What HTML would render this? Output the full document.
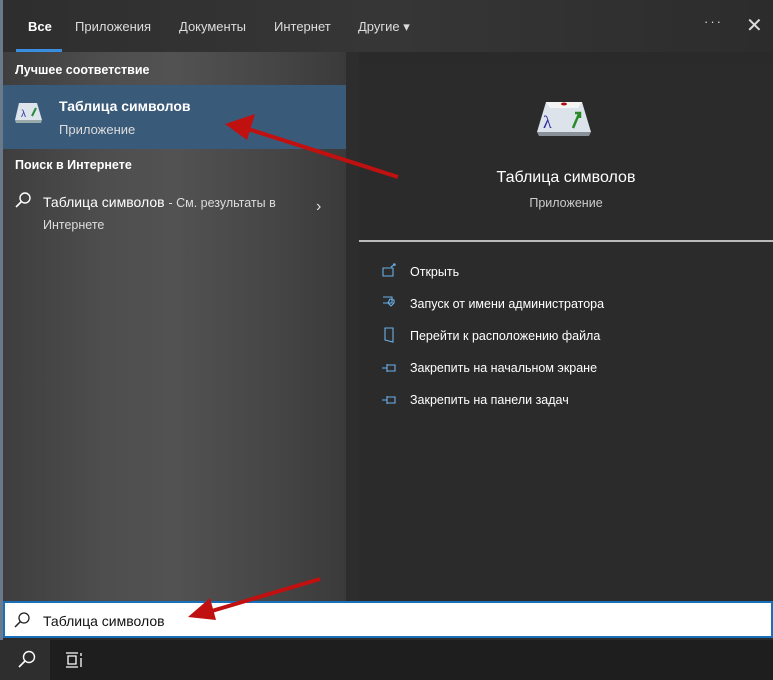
<!DOCTYPE html>
<html><head><meta charset="utf-8"><style>
body{margin:0;width:773px;height:680px;overflow:hidden;background:#2a2a2a;font-family:"Liberation Sans",sans-serif;position:relative;color:#fff}
.abs{position:absolute}
.tab{position:absolute;top:19px;font-size:13px;color:#ddd}
</style></head><body>
<div class="abs" style="left:0;top:0;width:773px;height:52px;background:linear-gradient(90deg,#2e2e2e,#363636 50%,#2c2c2c)"></div>
<div class="abs" style="left:0;top:0;width:3px;height:640px;background:#6a7a8a"></div>
<div class="tab" style="left:28px;color:#fff;font-weight:bold">Все</div>
<div class="abs" style="left:16px;top:49px;width:46px;height:3px;background:#3a8ee0"></div>
<div class="tab" style="left:75px">Приложения</div>
<div class="tab" style="left:179px">Документы</div>
<div class="tab" style="left:274px">Интернет</div>
<div class="tab" style="left:358px">Другие ▾</div>
<div class="tab" style="left:704px;top:14px;letter-spacing:2px">···</div>
<div class="tab" style="left:746px;top:13px;font-size:20px;color:#ddd">✕</div>
<div class="abs" style="left:3px;top:52px;width:343px;height:550px;background:linear-gradient(90deg,#3e3e3e,#4e4e4e 30%,#525252 50%,#454545 80%,#3a3a3a)"></div>
<div class="abs" style="left:346px;top:52px;width:13px;height:550px;background:#2d2d2d"></div>
<div class="abs" style="left:15px;top:63px;font-size:12.5px;font-weight:bold">Лучшее соответствие</div>
<div class="abs" style="left:3px;top:85px;width:343px;height:64px;background:#3a5a7a"></div>
<svg class="abs" style="left:14px;top:100px" width="30" height="24"><path d="M5 3h18l5 17H1z" fill="#dde4ec"/><path d="M1 20h27l-1 3H2z" fill="#9aa"/><text x="7" y="17" font-size="10" fill="#2a3a9a">λ</text><path d="M18 16l4-8" stroke="#2a8a3a" stroke-width="2"/></svg>
<div class="abs" style="left:59px;top:98px;font-size:14px;font-weight:bold">Таблица символов</div>
<div class="abs" style="left:59px;top:122px;font-size:13px;color:#ddd">Приложение</div>
<div class="abs" style="left:15px;top:158px;font-size:12.5px;font-weight:bold">Поиск в Интернете</div>
<svg class="abs" style="left:14px;top:191px" width="18" height="18"><circle cx="11" cy="7" r="5" fill="none" stroke="#fff" stroke-width="1.4"/><path d="M7.5 10.5L2 16" stroke="#fff" stroke-width="1.6"/></svg>
<div class="abs" style="left:43px;top:192px;font-size:14px;line-height:21px;width:260px">Таблица символов <span style="font-size:12.5px;color:#ddd">- См. результаты в</span><br><span style="font-size:12.5px;color:#ddd">Интернете</span></div>
<div class="abs" style="left:316px;top:198px;font-size:16px;color:#ddd">›</div>
<div class="abs" style="left:359px;top:64px;width:414px;height:538px;background:#2b2b2b"></div>
<svg class="abs" style="left:535px;top:98px" width="58" height="40"><path d="M11 4h36l9 30H2z" fill="#dde3ea"/><path d="M11 4h36l-4 6H15z" fill="#f4f4f4"/><path d="M2 34h54l-2 4H4z" fill="#8a9098"/><ellipse cx="29" cy="6" rx="3" ry="1.5" fill="#b01010"/><text x="8" y="30" font-size="18" fill="#2a2a9a" font-family="Liberation Serif">λ</text><path d="M38 30l6-14M40 15h5v5" stroke="#2a8a2a" stroke-width="2.5" fill="none"/></svg>
<div class="abs" style="left:359px;width:414px;top:169px;text-align:center;font-size:16px">Таблица символов</div>
<div class="abs" style="left:359px;width:414px;top:196px;text-align:center;font-size:12.5px;color:#ccc">Приложение</div>
<div class="abs" style="left:359px;top:240px;width:414px;height:2px;background:#bbb"></div>
<div class="abs" style="left:410px;top:256px;font-size:12.5px;line-height:32px">Открыть<br>Запуск от имени администратора<br>Перейти к расположению файла<br>Закрепить на начальном экране<br>Закрепить на панели задач</div>
<svg class="abs" style="left:380px;top:262px" width="20" height="148" fill="none" stroke="#6ab0e8" stroke-width="1.1"><path d="M3 6h10v8H3zM11 5l4-3M13 2h2v2"/><path d="M3 35h9v6H3M10 37l4 1v3l-3 3-3-3z"/><path d="M5 66h8v14l-8-2z"/><path d="M2 106h5M7 102v8M7 103h8v6H7"/><path d="M2 138h5M7 134v8M7 135h8v6H7"/></svg>
<div class="abs" style="left:3px;top:601px;width:770px;height:37px;background:#fff;box-sizing:border-box;border:2px solid #1a6fb8"></div>
<svg class="abs" style="left:13px;top:611px" width="18" height="18"><circle cx="11" cy="7" r="5" fill="none" stroke="#222" stroke-width="1.3"/><path d="M7.5 10.5L2 16" stroke="#222" stroke-width="1.5"/></svg>
<div class="abs" style="left:43px;top:613px;font-size:14px;color:#111">Таблица символов</div>
<svg class="abs" style="left:0;top:0" width="773" height="680"><path d="M398 177L245 128" stroke="#c01010" stroke-width="4"/><path d="M225 124l30-10-8 26z" fill="#c01010"/><path d="M320 579L205 613" stroke="#c01010" stroke-width="4"/><path d="M188 617l22-19 6 22z" fill="#c01010"/></svg>
<div class="abs" style="left:0;top:640px;width:773px;height:40px;background:#1e1e1e"></div>
<div class="abs" style="left:0;top:640px;width:50px;height:40px;background:#2e2e2e"></div>
<svg class="abs" style="left:17px;top:650px" width="20" height="20"><circle cx="12" cy="7" r="5.5" fill="none" stroke="#fff" stroke-width="1.4"/><path d="M8 11L2 17" stroke="#fff" stroke-width="1.6"/></svg>
<svg class="abs" style="left:65px;top:651px" width="20" height="18" fill="none" stroke="#fff" stroke-width="1.3"><path d="M1 2h12M1 16h12M3 5h8v8H3zM16 2v3M16 7v9"/></svg>
</body></html>
